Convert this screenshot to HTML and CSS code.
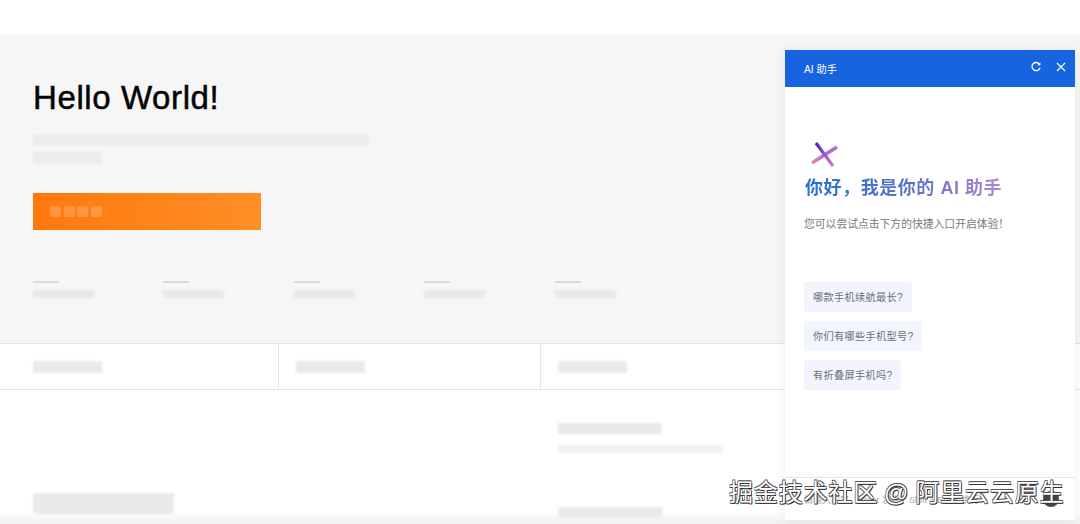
FILE: index.html
```html
<!DOCTYPE html>
<html lang="zh-CN">
  <head>
    <meta charset="UTF-8" />
    <meta name="viewport" content="width=device-width, initial-scale=1.0" />
    <title>AI 助手</title>
    <link rel="stylesheet" href="styles.css">
  </head>
  <body>
    <div class="page">
      <div class="topbar"></div>

      <section class="hero">
        <h1>Hello World!</h1>
        <div class="sk sk-desc-long"></div>
        <div class="sk sk-desc-short"></div>
        <div class="buy-button">
          <i></i><i></i><i></i><i></i>
        </div>
        <div class="stats">
          <div class="stat"><div class="stat-top"></div><div class="stat-bottom"></div></div>
          <div class="stat"><div class="stat-top"></div><div class="stat-bottom"></div></div>
          <div class="stat"><div class="stat-top"></div><div class="stat-bottom"></div></div>
          <div class="stat"><div class="stat-top"></div><div class="stat-bottom"></div></div>
          <div class="stat"><div class="stat-top"></div><div class="stat-bottom"></div></div>
        </div>
      </section>

      <div class="tabs">
        <div class="tab"><div class="sk sk-tab"></div></div>
        <div class="tab"><div class="sk sk-tab"></div></div>
        <div class="tab"><div class="sk sk-tab"></div></div>
      </div>

      <section class="content">
        <div class="content-left">
          <div class="sk sk-card"></div>
        </div>
        <div class="content-right">
          <div class="sk sk-title"></div>
          <div class="sk sk-line"></div>
          <div class="sk sk-title sk-title-next"></div>
        </div>
      </section>
    </div>

    <aside class="assistant">
      <header class="assistant-head">
        <span class="assistant-name">AI 助手</span>
        <div class="assistant-actions">
          <svg class="icon" viewBox="0 0 12 12" width="12" height="12">
            <path d="M9.6 3.4A4.1 4.1 0 1 0 10.1 6.6" fill="none" stroke="#fff" stroke-width="1.3" />
            <path d="M10.4 1.2V4.3H7.3Z" fill="#fff" />
          </svg>
          <svg class="icon" viewBox="0 0 12 12" width="12" height="12">
            <path d="M2 2L10 10M10 2L2 10" fill="none" stroke="#fff" stroke-width="1.1" />
          </svg>
        </div>
      </header>

      <div class="assistant-body">
        <svg class="logo" viewBox="0 0 30 28" width="30" height="28">
          <defs>
            <linearGradient id="bar-a" gradientUnits="userSpaceOnUse" x1="6" y1="1" x2="23" y2="24">
              <stop offset="0" stop-color="#4f1fb4" />
              <stop offset="0.5" stop-color="#9a55cf" />
              <stop offset="1" stop-color="#c77db8" />
            </linearGradient>
            <linearGradient id="bar-b" gradientUnits="userSpaceOnUse" x1="27" y1="4" x2="2" y2="21">
              <stop offset="0" stop-color="#a878e6" />
              <stop offset="0.5" stop-color="#b066cc" />
              <stop offset="1" stop-color="#e58cab" />
            </linearGradient>
          </defs>
          <path d="M27 5L2 21" stroke="url(#bar-b)" stroke-width="3.6" fill="none" />
          <path d="M6 1L23 24" stroke="url(#bar-a)" stroke-width="3.2" fill="none" />
        </svg>
        <h2 class="greeting">你好，我是你的 AI 助手</h2>
        <p class="tip">您可以尝试点击下方的快捷入口开启体验！</p>
        <ul class="chips">
          <li class="chip">哪款手机续航最长?</li>
          <li class="chip">你们有哪些手机型号?</li>
          <li class="chip">有折叠屏手机吗?</li>
        </ul>
      </div>

      <footer class="assistant-input">
        <span class="placeholder">请输入内容，Enter 发送，Shift + Enter 换行</span>
        <span class="send"></span>
      </footer>
    </aside>

    <div class="watermark">掘金技术社区 @ 阿里云云原生</div>
  </body>
</html>
```

FILE: styles.css
```css
html, body {
  height: 100%;
}
body {
  margin: 0;
  background-color: #fff;
  font-family: "Liberation Sans", "Noto Sans CJK SC", sans-serif;
  overflow: hidden;
  position: relative;
}

.page {
  display: flex;
  flex-direction: column;
  height: 100%;
}
/* soft grey fade along the bottom edge of the capture */
.page::after {
  content: "";
  position: absolute;
  left: 0;
  right: 0;
  bottom: 0;
  height: 12px;
  background: linear-gradient(rgba(238, 238, 238, 0), #efefef);
}
.topbar {
  height: 35px;
  flex: none;
}

.sk {
  background-color: #e9e9e9;
  filter: blur(1px);
}

.hero {
  height: 308px;
  flex: none;
  box-sizing: border-box;
  padding: 44px 0 0 33px;
  background-color: #f6f6f6;
}
.hero h1 {
  margin: 0;
  font-size: 33px;
  line-height: 38px;
  font-weight: 400;
  letter-spacing: 0.6px;
  color: #050505;
  -webkit-text-stroke: 0.5px #050505;
}
.sk-desc-long {
  width: 336px;
  height: 12px;
  margin-top: 17px;
  background-color: #ececec;
}
.sk-desc-short {
  width: 69px;
  height: 12px;
  margin-top: 6px;
  background-color: #ececec;
}
.buy-button {
  width: 228px;
  height: 37px;
  margin-top: 29px;
  padding-left: 17px;
  box-sizing: border-box;
  display: flex;
  align-items: center;
  gap: 2.5px;
  background: linear-gradient(90deg, #ff780e, #ff8f25);
  filter: blur(0.4px);
}
.buy-button i {
  width: 11px;
  height: 11px;
  background-color: rgba(255, 255, 255, 0.2);
  border-radius: 1px;
}
.stats {
  display: flex;
  margin-top: 51px;
}
.stat {
  width: 130.4px;
}
.stat-top {
  width: 26px;
  height: 2px;
  background-color: #dcdcdc;
  filter: blur(0.6px);
}
.stat-bottom {
  width: 61px;
  height: 8px;
  margin-top: 7px;
  background-color: #e8e8e8;
  filter: blur(1px);
}

.tabs {
  display: grid;
  grid-template-columns: 279px 262px 1fr;
  height: 47px;
  flex: none;
  box-sizing: border-box;
  border-top: 1px solid #e3e3e3;
  border-bottom: 1px solid #e3e3e3;
}
.tab {
  display: flex;
  align-items: center;
  padding-left: 17px;
  border-right: 1px solid #e6e6e6;
}
.tab:first-child {
  padding-left: 33px;
}
.tab:last-child {
  border-right: none;
}
.sk-tab {
  width: 69px;
  height: 12px;
}

.content {
  display: flex;
  flex: 1;
  min-height: 0;
}
.content-left {
  width: 558px;
  box-sizing: border-box;
  padding: 103px 0 0 33px;
}
.content-right {
  flex: 1;
  padding-top: 33px;
}
.sk-card {
  width: 141px;
  height: 21px;
}
.sk-title {
  width: 104px;
  height: 11px;
}
.sk-line {
  width: 165px;
  height: 8px;
  margin-top: 11px;
  background-color: #f1f1f1;
}
.sk-title-next {
  margin-top: 54px;
}

.assistant {
  position: absolute;
  left: 785px;
  top: 50px;
  width: 290px;
  height: 470px;
  display: flex;
  flex-direction: column;
  background-color: #fff;
  box-shadow: 0 0 12px rgba(0, 0, 0, 0.07);
}
.assistant-head {
  height: 37px;
  flex: none;
  display: flex;
  align-items: center;
  justify-content: space-between;
  padding: 0 8px 0 19px;
  background-color: #1664e0;
  color: #fff;
}
.assistant-name {
  font-size: 10.2px;
}
.assistant-actions {
  display: flex;
  gap: 13px;
  margin-top: -4px;
}
.icon {
  display: block;
}

.assistant-body {
  flex: 1;
  padding: 55px 0 0 19px;
}
.logo {
  display: block;
  margin-left: 6px;
}
.greeting {
  margin: 5px 0 0 1px;
  width: max-content;
  font-size: 18px;
  line-height: 26px;
  font-weight: 700;
  letter-spacing: 0.55px;
  background: linear-gradient(90deg, #2470d2, #5f72c9 55%, #b486d2);
  -webkit-background-clip: text;
  background-clip: text;
  color: transparent;
}
.tip {
  margin: 15px 0 0;
  font-size: 10.8px;
  line-height: 16px;
  color: #7a7a7a;
}
.chips {
  list-style: none;
  margin: 50px 0 0;
  padding: 0;
  display: flex;
  flex-direction: column;
  align-items: flex-start;
  gap: 9px;
}
.chip {
  padding: 1px 9px 0;
  height: 29px;
  line-height: 29px;
  font-size: 10.2px;
  letter-spacing: 0.3px;
  color: #6b6f7a;
  background-color: #f3f5fd;
  border-radius: 2px;
}

.assistant-input {
  height: 43px;
  flex: none;
  display: flex;
  align-items: center;
  justify-content: space-between;
  box-sizing: border-box;
  padding: 0 16px 0 19px;
  border-top: 1px solid #e6e6e6;
}
.placeholder {
  font-size: 9px;
  color: #a8a8a8;
}
.send {
  width: 16px;
  height: 16px;
  border-radius: 50%;
  background-color: #444;
}

.watermark {
  position: absolute;
  left: 729px;
  top: 479px;
  font-size: 24px;
  line-height: 28px;
  letter-spacing: 0.85px;
  word-spacing: -1.5px;
  white-space: nowrap;
  color: #fff;
  text-shadow: 1px 1px 0 #333, -0.6px -0.6px 0 #555, 0.6px -0.6px 0 #555, -0.6px 0.6px 0 #555;
}
```
